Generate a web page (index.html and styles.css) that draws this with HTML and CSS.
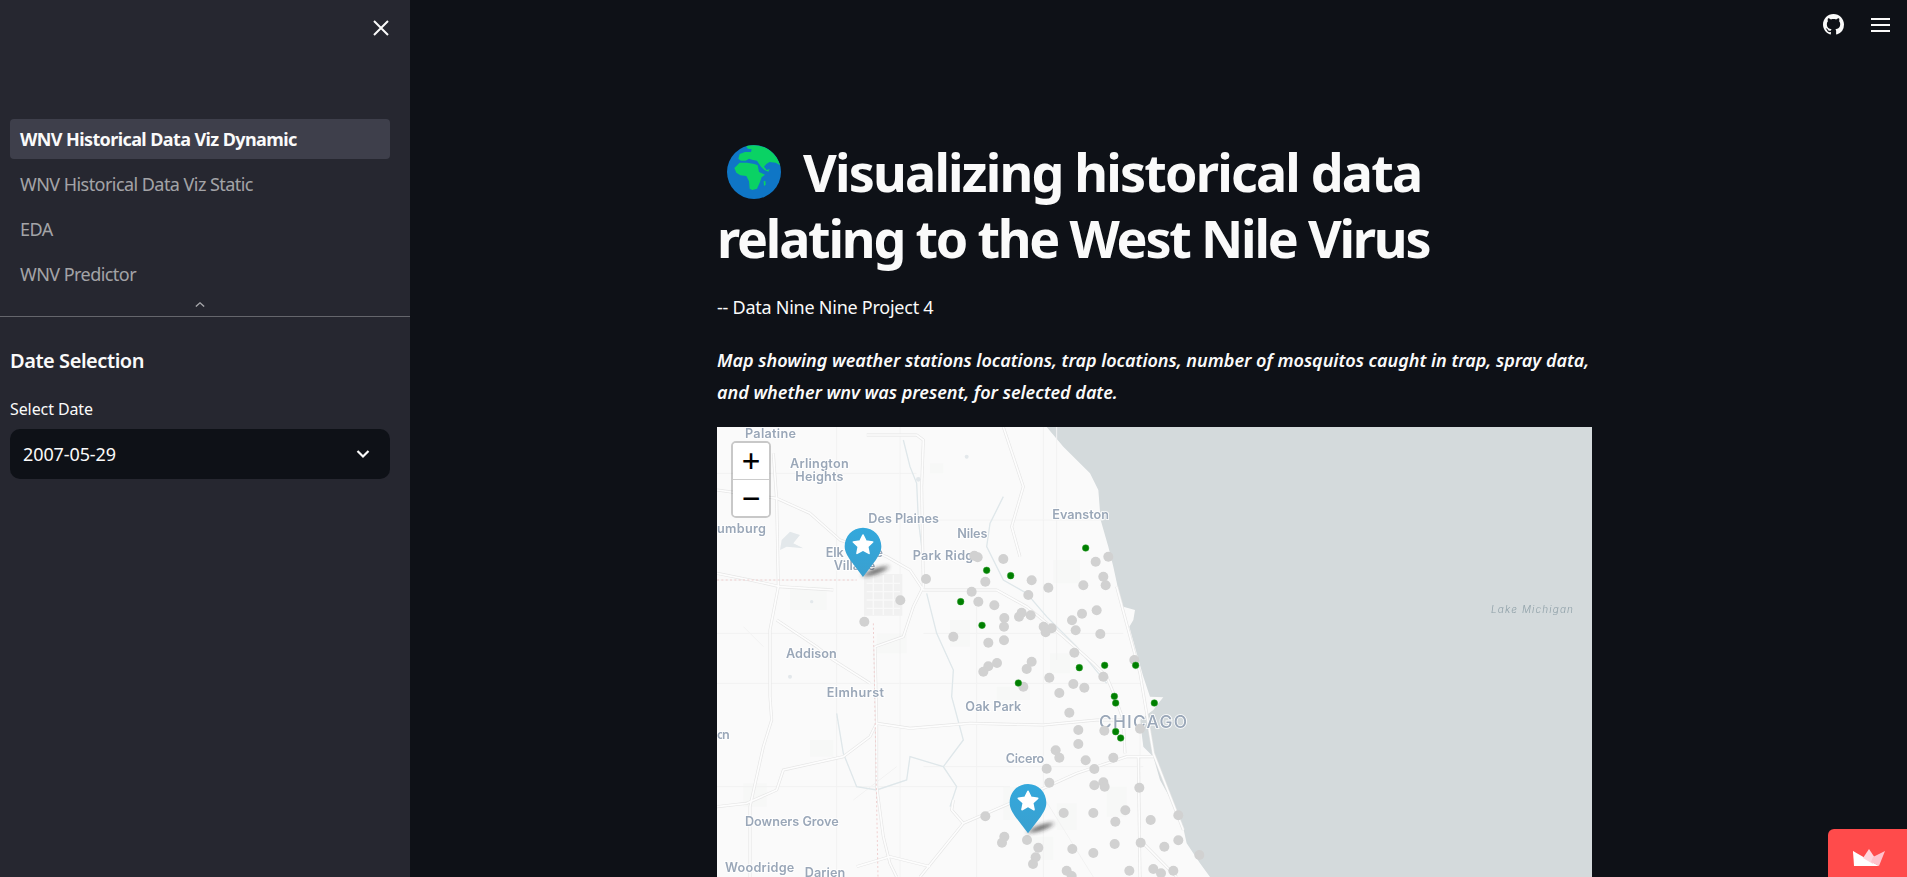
FILE: index.html
```html
<!DOCTYPE html>
<html lang="en">
<head>
<meta charset="utf-8">
<title>WNV Historical Data Viz Dynamic</title>
<link rel="stylesheet" href="styles.css">
</head>
<body>
<div class="app">
  <aside class="sidebar">
    <button class="close" aria-label="Close sidebar">
      <svg viewBox="0 0 18 18" width="18" height="18"><path d="M2 2 16 16M16 2 2 16"/></svg>
    </button>
    <nav class="nav">
      <a class="nav-item active">WNV Historical Data Viz Dynamic</a>
      <a class="nav-item">WNV Historical Data Viz Static</a>
      <a class="nav-item">EDA</a>
      <a class="nav-item">WNV Predictor</a>
      <div class="nav-toggle"><svg viewBox="0 0 12 6" width="10" height="5"><path d="M1 5.5 6 1l5 4.5"/></svg></div>
    </nav>
    <section class="side-body">
      <h2 class="side-title">Date Selection</h2>
      <label class="field-label">Select Date</label>
      <div class="select">
        <span>2007-05-29</span>
        <svg viewBox="0 0 14 10" width="14" height="10"><path d="M1.5 2 7 7.5 12.500 2"/></svg>
      </div>
    </section>
  </aside>

  <main class="main">
    <div class="top-icons">
      <svg class="gh" viewBox="0 0 16 16" width="21" height="21"><path d="M8 0C3.58 0 0 3.58 0 8c0 3.54 2.29 6.53 5.47 7.59.4.07.55-.17.55-.38 0-.19-.01-.82-.01-1.49-2.01.37-2.53-.49-2.69-.94-.09-.23-.48-.94-.82-1.13-.28-.15-.68-.52-.01-.53.63-.01 1.08.58 1.23.82.72 1.21 1.87.87 2.33.66.07-.52.28-.87.51-1.07-1.78-.2-3.64-.89-3.64-3.95 0-.87.31-1.59.82-2.15-.08-.2-.36-1.02.08-2.12 0 0 .67-.21 2.2.82.64-.18 1.32-.27 2-.27.68 0 1.36.09 2 .27 1.53-1.04 2.2-.82 2.2-.82.44 1.1.16 1.92.08 2.12.51.56.82 1.27.82 2.15 0 3.07-1.87 3.75-3.65 3.95.29.25.54.73.54 1.48 0 1.07-.01 1.93-.01 2.2 0 .21.15.46.55.38A8.013 8.013 0 0016 8c0-4.42-3.58-8-8-8z"/></svg>
      <div class="burger"><i></i><i></i><i></i></div>
    </div>

    <div class="content">
      <h1 class="title">
        <svg class="globe" viewBox="22 15 162 162" width="54" height="54">
          <circle class="ocean" cx="103" cy="96" r="81"/>
          <path class="land" d="M80 18C115 10 152 22 172 55L182 76 168 68 150 66 140 72 133 80 141 90 150 87 146 95 134 90 124 80 112 62 100 60 88 56 78 62 64 62 56 56 60 42 76 36 94 36 96 28 84 26Z"/>
          <path class="land" d="M60 68 82 68 104 72 114 76 118 96 136 104 126 112 120 128 112 146 98 150 90 146 88 124 80 108 62 106 50 98 44 84Z"/>
          <path class="land" d="M132 124 137 122 138 134 133 138Z"/>
        </svg><span class="title-first">Visualizing historical data</span><br>relating to the West Nile Virus
      </h1>
      <p class="byline">-- Data Nine Nine Project 4</p>
      <p class="desc"><em>Map showing weather stations locations, trap locations, number of mosquitos caught in trap, spray data, and whether wnv was present, for selected date.</em></p>

      <div class="map">
        <svg class="map-svg" viewBox="21 21 2625 1350" width="875" height="450" preserveAspectRatio="none">
          <defs>
            <filter id="soft" x="-2%" y="-2%" width="104%" height="104%"><feGaussianBlur stdDeviation="1.8"/></filter>
            <filter id="dot" x="-5%" y="-5%" width="110%" height="110%"><feGaussianBlur stdDeviation="1.5"/></filter>
            <filter id="shade" x="-50%" y="-50%" width="200%" height="200%"><feGaussianBlur stdDeviation="6"/></filter>
            <linearGradient id="pin" x1="0" y1="0" x2="0" y2="1"><stop offset="0" stop-color="#33a8dc"/><stop offset="1" stop-color="#3aa0d0"/></linearGradient>
            <g id="marker">
              <path class="pin-shadow" d="M-6 146 C20 128 45 118 80 116 C62 132 35 144 -6 146Z"/>
              <path fill="url(#pin)" d="M0 0C32 0 55 25 55 56C55 72 47 84 38 98L0 148-38 98C-47 84-55 72-55 56-55 25-32 0 0 0Z"/>
              <path class="star" d="M0 22 9 40 29 43 14 57 18 77 0 67-18 77-14 57-29 43-9 40Z"/>
            </g>
          </defs>
          <rect class="land-bg" x="21" y="21" width="2625" height="1350"/>
          <g filter="url(#soft)">
            <path class="water" d="M1010 21 1060 80 1140 160 1165 210 1172 300 1195 380 1210 440 1225 510 1240 560 1275 570 1270 600 1258 620 1280 700 1300 770 1320 830 1360 832 1345 850 1330 870 1290 900 1300 980 1330 1010 1350 1080 1400 1170 1420 1225 1430 1270 1470 1330 1500 1371H2646V21Z"/>
            <g class="blocks">
              <rect x="660" y="130" width="40" height="30"/><rect x="500" y="640" width="90" height="60"/><rect x="880" y="1100" width="90" height="100"/><rect x="960" y="1250" width="70" height="70"/><rect x="1040" y="1150" width="60" height="80"/><rect x="720" y="600" width="60" height="80"/><rect x="1030" y="420" width="80" height="70"/><rect x="1020" y="700" width="60" height="60"/><rect x="1190" y="1100" width="60" height="90"/><rect x="100" y="1090" width="70" height="70"/><rect x="300" y="960" width="70" height="50"/><rect x="240" y="500" width="110" height="70"/><rect x="860" y="800" width="100" height="40"/>
            </g>
            <g class="grid">
              <path d="M21 160H620M21 480H440M21 790H1300M21 1100H900M380 21V1371M570 21V1371M800 560V1371M1000 21V1371M1290 880V1371M640 300H1180M640 640H1240M21 640H480M640 1040H1300M1040 21V720M430 1140 560 1040M1000 1130 1150 1371M160 680 100 620"/>
            </g>
            <g class="airport">
              <rect x="462" y="462" width="115" height="125"/>
              <path d="M470 490H570M470 515H570M470 540H570M470 565H570M490 465V585M520 465V585M550 465V585"/>
            </g>
            <g class="river">
              <path d="M580 60 600 140 620 190 625 300 640 420M880 230 840 310 830 380 880 480 950 520 1010 590 1100 680 1190 790M650 520 680 640 730 750 725 830 760 960 700 1040 740 1100 720 1160M380 880 400 1000 440 1100 500 1110 590 1080 600 1010 700 1040"/>
            </g>
            <g class="lakes">
              <path d="M215 360 240 335 270 345 250 370 280 385 230 380 210 390Z"/>
              <circle cx="625" cy="178" r="7"/><circle cx="770" cy="110" r="6"/><circle cx="305" cy="545" r="5"/><circle cx="240" cy="770" r="6"/>
            </g>
            <g class="road-case">
              <path id="r1" d="M21 210 200 235 300 280 390 360 530 410 600 450 640 510H860L950 560 1060 650 1150 730 1190 770 1215 830 1240 900 1245 1000"/>
              <path id="r2" d="M190 100 200 240 205 500 180 630 180 830 185 900 160 980 120 1160 120 1371"/>
              <path id="r3" d="M470 45H620L640 60 635 200 640 500"/>
              <path id="r4" d="M880 21 940 200 905 320 930 410"/>
              <path id="r5" d="M500 910 600 925 780 910 1000 915 1160 900H1240"/>
              <path id="r6" d="M495 680 500 910 500 1100 520 1250 540 1330 560 1371"/>
              <path id="r7" d="M495 680 580 650 610 560 640 500"/>
              <path id="r8" d="M200 600 320 680 370 720 480 790"/>
              <path id="r9" d="M21 1160 110 1150 200 1110 220 1050 400 1010 480 950 500 910"/>
              <path id="r10" d="M630 1371 760 1210 900 1150 1100 1060 1250 1010H1330"/>
              <path id="r11" d="M1285 1010 1290 1371"/>
              <path id="r12" d="M1220 500 1290 760 1330 1000 1420 1230M1300 1270 1400 1371M440 1340 540 1310 660 1340M760 1210 725 1170 730 1140M21 460 120 480 210 500 370 510"/>
            </g>
            <g class="road-core">
              <use href="#r1"/><use href="#r2"/><use href="#r3"/><use href="#r4"/><use href="#r5"/><use href="#r6"/><use href="#r7"/><use href="#r8"/><use href="#r9"/><use href="#r10"/><use href="#r11"/><use href="#r12"/>
            </g>
            <path class="border" d="M21 480H440M490 610 504 1371"/>
            <g class="labels">
              <text x="105" y="54" textLength="153">Palatine</text>
              <text x="240" y="144" textLength="176">Arlington</text>
              <text x="256" y="183" textLength="144">Heights</text>
              <text x="475" y="308" textLength="212">Des Plaines</text>
              <text x="21" y="340" textLength="147">umburg</text>
              <text x="347" y="412" textLength="172">Elk Grove</text>
              <text x="371" y="449" textLength="125">Village</text>
              <text x="742" y="355" textLength="90">Niles</text>
              <text x="1027" y="297" textLength="170">Evanston</text>
              <text x="608" y="420" textLength="205">Park Ridge</text>
              <text x="228" y="713" textLength="152">Addison</text>
              <text x="350" y="830" textLength="172">Elmhurst</text>
              <text x="766" y="874" textLength="168">Oak Park</text>
              <text class="big" x="1167" y="925" textLength="264">CHICAGO</text>
              <text x="887" y="1029" textLength="116">Cicero</text>
              <text x="105" y="1219" textLength="281">Downers Grove</text>
              <text x="45" y="1355" textLength="208">Woodridge</text>
              <text x="284" y="1371" textLength="122">Darien</text>
              <text x="21" y="957" textLength="38">on</text>
              <text class="lake" x="2343" y="580" textLength="246">Lake Michigan</text>
            </g>
          </g>
          <g class="dots" filter="url(#dot)">
            <circle cx="793" cy="407" r="15"/><circle cx="803" cy="412" r="15"/><circle cx="880" cy="417" r="15"/><circle cx="1157" cy="425" r="15"/><circle cx="1195" cy="410" r="15"/><circle cx="1180" cy="470" r="15"/><circle cx="1120" cy="496" r="15"/><circle cx="1187" cy="496" r="15"/><circle cx="965" cy="481" r="15"/><circle cx="1015" cy="503" r="15"/><circle cx="826" cy="485" r="15"/><circle cx="648" cy="477" r="15"/><circle cx="785" cy="515" r="15"/><circle cx="955" cy="525" r="15"/><circle cx="571" cy="541" r="15"/><circle cx="805" cy="545" r="15"/><circle cx="853" cy="556" r="15"/><circle cx="1160" cy="571" r="15"/><circle cx="1116" cy="581" r="15"/><circle cx="935" cy="578" r="15"/><circle cx="927" cy="590" r="15"/><circle cx="962" cy="586" r="15"/><circle cx="883" cy="594" r="15"/><circle cx="882" cy="620" r="15"/><circle cx="1086" cy="601" r="15"/><circle cx="463" cy="605" r="15"/><circle cx="1001" cy="620" r="15"/><circle cx="1025" cy="625" r="15"/><circle cx="1007" cy="637" r="15"/><circle cx="1097" cy="631" r="15"/><circle cx="1171" cy="642" r="15"/><circle cx="730" cy="650" r="15"/><circle cx="835" cy="668" r="15"/><circle cx="882" cy="661" r="15"/><circle cx="1093" cy="698" r="15"/><circle cx="861" cy="729" r="15"/><circle cx="835" cy="739" r="15"/><circle cx="820" cy="755" r="15"/><circle cx="965" cy="725" r="15"/><circle cx="950" cy="747" r="15"/><circle cx="1273" cy="720" r="15"/><circle cx="1180" cy="770" r="15"/><circle cx="1018" cy="773" r="15"/><circle cx="1090" cy="792" r="15"/><circle cx="1123" cy="803" r="15"/><circle cx="940" cy="800" r="15"/><circle cx="1048" cy="819" r="15"/><circle cx="1078" cy="878" r="15"/><circle cx="1105" cy="930" r="15"/><circle cx="1183" cy="932" r="15"/><circle cx="1290" cy="926" r="15"/><circle cx="1105" cy="972" r="15"/><circle cx="1037" cy="991" r="15"/><circle cx="1048" cy="1013" r="15"/><circle cx="1127" cy="1021" r="15"/><circle cx="1210" cy="1013" r="15"/><circle cx="1010" cy="1046" r="15"/><circle cx="1153" cy="1047" r="15"/><circle cx="1018" cy="1088" r="15"/><circle cx="1153" cy="1096" r="15"/><circle cx="1180" cy="1087" r="15"/><circle cx="1184" cy="1100" r="15"/><circle cx="1288" cy="1103" r="15"/><circle cx="1061" cy="1179" r="15"/><circle cx="1150" cy="1179" r="15"/><circle cx="1246" cy="1171" r="15"/><circle cx="1216" cy="1205" r="15"/><circle cx="1322" cy="1200" r="15"/><circle cx="1405" cy="1186" r="15"/><circle cx="826" cy="1189" r="15"/><circle cx="883" cy="1250" r="15"/><circle cx="876" cy="1268" r="15"/><circle cx="951" cy="1260" r="15"/><circle cx="985" cy="1283" r="15"/><circle cx="1087" cy="1287" r="15"/><circle cx="1150" cy="1299" r="15"/><circle cx="1214" cy="1272" r="15"/><circle cx="1292" cy="1268" r="15"/><circle cx="1363" cy="1280" r="15"/><circle cx="1405" cy="1261" r="15"/><circle cx="1468" cy="1305" r="15"/><circle cx="977" cy="1312" r="15"/><circle cx="969" cy="1332" r="15"/><circle cx="1070" cy="1352" r="15"/><circle cx="1258" cy="1352" r="15"/><circle cx="1330" cy="1347" r="15"/><circle cx="1353" cy="1360" r="15"/><circle cx="1390" cy="1352" r="15"/><circle cx="1085" cy="1368" r="15"/>
          </g>
          <g class="hits">
            <circle cx="1127" cy="384" r="10"/><circle cx="830" cy="451" r="10"/><circle cx="902" cy="467" r="10"/><circle cx="752" cy="545" r="10"/><circle cx="816" cy="616" r="10"/><circle cx="1108" cy="743" r="10"/><circle cx="1184" cy="736" r="10"/><circle cx="1277" cy="736" r="10"/><circle cx="925" cy="789" r="10"/><circle cx="1213" cy="829" r="10"/><circle cx="1217" cy="849" r="10"/><circle cx="1333" cy="849" r="10"/><circle cx="1217" cy="935" r="10"/><circle cx="1232" cy="954" r="10"/>
          </g>
          <use href="#marker" x="459" y="323"/>
          <use href="#marker" x="954" y="1092"/>
        </svg>
        <div class="zoom-ctl">
          <button class="zoom-btn">+</button>
          <button class="zoom-btn">−</button>
        </div>
      </div>
    </div>

    <div class="badge">
      <svg viewBox="0 0 32 18" width="32" height="18">
        <path class="sail-a" d="M0 2 16 17H1Z"/>
        <path class="sail-a" d="M0 2 26 17H4Z"/>
        <path class="sail-b" d="M10 9 16 0 22 9 20 15Z"/>
        <path class="sail-c" d="M20 8 32 2 26 17 18 13Z"/>
      </svg>
    </div>
  </main>
</div>
</body>
</html>
```

FILE: styles.css
```css
* { box-sizing: border-box; }
html, body { margin: 0; height: 100%; overflow: hidden; }
body {
  background: #0e1117;
  color: #fafafa;
  font-family: "Noto Sans", "Open Sans", sans-serif;
}
.app { display: flex; height: 100vh; }

/* sidebar */
.sidebar {
  position: relative;
  flex: 0 0 410px;
  background: #262730;
  padding-top: 119px;
}
.close {
  position: absolute;
  top: 19px;
  left: 372px;
  width: 18px;
  height: 18px;
  padding: 0;
  border: 0;
  background: none;
}
.close svg path { stroke: #fafafa; stroke-width: 2; fill: none; }
.nav {
  position: relative;
  display: flex;
  flex-direction: column;
  gap: 5px;
  height: 198px;
  padding: 0 20px 0 10px;
  border-bottom: 1px solid rgba(250, 250, 250, .3);
}
.nav-item {
  height: 40px;
  display: flex;
  align-items: center;
  padding-left: 10px;
  border-radius: 4px;
  font-size: 18px;
  letter-spacing: -.55px;
  color: rgba(250, 250, 250, .6);
}
.nav-item.active {
  background: #3e3f4b;
  color: #fafafa;
  font-weight: 700;
  letter-spacing: -.6px;
}
.nav-toggle {
  position: absolute;
  left: 195px;
  bottom: 5px;
  width: 10px;
  height: 10px;
  line-height: 0;
}
.nav-toggle path { stroke: rgba(250, 250, 250, .6); stroke-width: 1.6; fill: none; }
.side-body { padding: 30px 20px 0 10px; }
.side-title {
  margin: 0 0 22px;
  font-size: 20px;
  line-height: 28px;
  font-weight: 600;
  letter-spacing: -.45px;
}
.field-label {
  display: block;
  margin-bottom: 8px;
  font-size: 16px;
  line-height: 24px;
  letter-spacing: -.1px;
}
.select {
  display: flex;
  align-items: center;
  justify-content: space-between;
  height: 50px;
  padding: 0 20px 0 13px;
  border-radius: 10px;
  background: #0e1117;
  font-size: 18px;
  letter-spacing: -.1px;
}
.select path { stroke: #fafafa; stroke-width: 2.2; fill: none; }

/* main */
.main {
  position: relative;
  flex: 1;
  min-width: 0;
  overflow: hidden;
}
.top-icons {
  position: absolute;
  top: 14px;
  right: 17px;
  display: flex;
  align-items: center;
  gap: 27px;
}
.gh { fill: #fafafa; display: block; }
.burger { display: flex; flex-direction: column; gap: 4px; width: 19px; }
.burger i { display: block; height: 2px; background: #fafafa; }
.content { width: 875px; margin-left: 307px; padding-top: 139px; }
.title {
  margin: 0;
  font-size: 52px;
  line-height: 66px;
  font-weight: 700;
  letter-spacing: -2.2px;
  white-space: nowrap;
}
.title-first { letter-spacing: -1.8px; }
.globe { margin: 0 22px 0 10px; vertical-align: -7px; }
.ocean { fill: #0f76c6; }
.land { fill: #0ad264; }
.byline {
  margin: 20px 0 0;
  font-size: 18px;
  line-height: 32px;
  letter-spacing: -.25px;
}
.desc {
  margin: 21px 0 0;
  font-size: 18px;
  line-height: 32px;
  font-weight: 600;
  letter-spacing: -.02px;
}
.map { position: relative; width: 875px; height: 450px; margin-top: 19px; overflow: hidden; }
.map-svg { display: block; }
.zoom-ctl {
  position: absolute;
  top: 14px;
  left: 14px;
  display: flex;
  flex-direction: column;
  width: 40px;
  border: 2px solid rgba(0, 0, 0, .2);
  border-radius: 5px;
  background-clip: padding-box;
}
.zoom-btn {
  height: 36px;
  padding: 0;
  border: 0;
  background: #fff;
  color: #000;
  font: 400 30px/36px "DejaVu Sans Mono", "Liberation Mono", monospace;
}
.zoom-btn:first-child { border-bottom: 1px solid #ccc; border-radius: 3px 3px 0 0; height: 37px; }
.zoom-btn:last-child { border-radius: 0 0 3px 3px; }

/* map layers */
.land-bg { fill: #fafafa; }
.water { fill: #d4dadc; }
.blocks rect { fill: #f7f8f7; }
.grid path { stroke: #f2f2f2; stroke-width: 3; fill: none; }
.airport rect { fill: #f1f1f1; }
.airport path { stroke: #f9f9f9; stroke-width: 4; fill: none; }
.river path { stroke: #dfe7ea; stroke-width: 4; fill: none; }
.lakes path, .lakes circle { fill: #e3e8eb; }
.road-case { stroke: #e6e6e6; stroke-width: 9; fill: none; stroke-linejoin: round; }
.road-core { stroke: #fdfdfd; stroke-width: 5; fill: none; stroke-linejoin: round; }
.border { stroke: #efcfcf; stroke-width: 3; stroke-dasharray: 6 7; fill: none; }
.labels text {
  fill: #9aa7b8;
  font-family: Inter, "Noto Sans", sans-serif;
  font-size: 38px;
  font-weight: 600;
  stroke: #fff;
  stroke-width: 5px;
  paint-order: stroke;
}
.labels .big { font-size: 52px; font-weight: 500; }
.labels .lake { fill: #8fa0a8; font-size: 30px; font-style: italic; font-weight: 300; stroke: none; }
.dots circle { fill: #d1d1d1; }
.hits circle { fill: #007f00; stroke: #33a033; stroke-width: 1.5; }
.pin-shadow { fill: #222; opacity: .75; filter: url(#shade); }
.star { fill: #fff; stroke: #fff; stroke-width: 5; stroke-linejoin: round; }

/* badge */
.badge {
  position: absolute;
  right: 0;
  bottom: 0;
  width: 79px;
  height: 48px;
  padding: 20px 0 0 25px;
  border-radius: 6px 0 0 0;
  background: #ff4b4b;
}
.badge svg { display: block; }
.sail-a { fill: #fff; }
.sail-b { fill: #ffd5dc; }
.sail-c { fill: #ffc2cc; }
```
